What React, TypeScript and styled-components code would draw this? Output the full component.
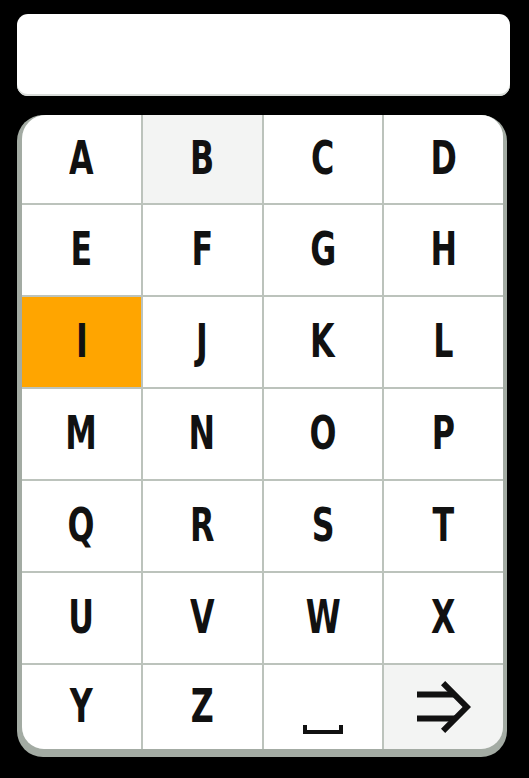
import React from "react";
import styled, { createGlobalStyle } from "styled-components";

const Global = createGlobalStyle`
  html, body { margin: 0; padding: 0; background: #000; }
  body { width: 529px; height: 778px; overflow: hidden; }
`;

const Screen = styled.div`
  width: 529px;
  height: 778px;
  background: #000;
  box-sizing: border-box;
  padding: 14px 19px 0 17px;
  display: flex;
  flex-direction: column;
  gap: 19px;
`;

const Input = styled.div`
  height: 82px;
  width: 493px;
  background: #fff;
  border-radius: 11px;
  box-shadow: inset 0 -2px 0 #d8dcd8;
`;

const Panel = styled.div`
  width: 490px;
  background: #a3aba3;
  border-radius: 26px;
  padding: 0 4px 8px 5px;
  box-sizing: border-box;
`;

const Grid = styled.div`
  display: grid;
  grid-template-columns: repeat(4, 1fr);
  grid-template-rows: 88px repeat(5, 90px) 84px;
  gap: 2px;
  background: #bcc3bc;
  border-radius: 24px 22px 22px 22px;
  overflow: hidden;
`;

const Key = styled.div<{ $tone: "white" | "gray" | "orange" }>`
  display: flex;
  align-items: center;
  justify-content: center;
  background: ${(p) =>
    p.$tone === "orange" ? "#ffa500" : p.$tone === "gray" ? "#f3f4f3" : "#fff"};
  font-family: "DejaVu Sans Condensed", "DejaVu Sans", sans-serif;
  font-stretch: condensed;
  font-weight: bold;
  font-size: 47px;
  color: #111;
  line-height: 1;
`;

const Glyph = styled.span`
  display: inline-block;
  transform: scaleX(0.75);
  margin-top: -4px;
`;

const IconWrap = styled.span<{ $shift: number }>`
  display: flex;
  align-items: center;
  justify-content: center;
  margin-top: ${(p) => p.$shift}px;
`;

const SpaceIcon = () => (
  <svg width="40" height="10" viewBox="0 0 40 10">
    <path d="M0 0 H4 V5 H36 V0 H40 V9 H0 Z" fill="#111" />
  </svg>
);

const ArrowIcon = () => (
  <svg width="54" height="52" viewBox="0 0 54 52">
    <rect x="0" y="10.5" width="38" height="6" fill="#111" />
    <rect x="0" y="34.5" width="38" height="6" fill="#111" />
    <polygon points="24,4.2 28.2,0 54,26 28.2,52 24,47.8 45.6,26" fill="#111" />
  </svg>
);

const letters = "ABCDEFGHIJKLMNOPQRSTUVWXYZ".split("");

export default function App() {
  return (
    <>
      <Global />
      <Screen>
        <Input />
        <Panel>
          <Grid>
            {letters.map((l) => (
              <Key key={l} $tone={l === "I" ? "orange" : l === "B" ? "gray" : "white"}>
                <Glyph>{l}</Glyph>
              </Key>
            ))}
            <Key $tone="white">
              <IconWrap $shift={46}>
                <SpaceIcon />
              </IconWrap>
            </Key>
            <Key $tone="gray">
              <IconWrap $shift={0}>
                <ArrowIcon />
              </IconWrap>
            </Key>
          </Grid>
        </Panel>
      </Screen>
    </>
  );
}
